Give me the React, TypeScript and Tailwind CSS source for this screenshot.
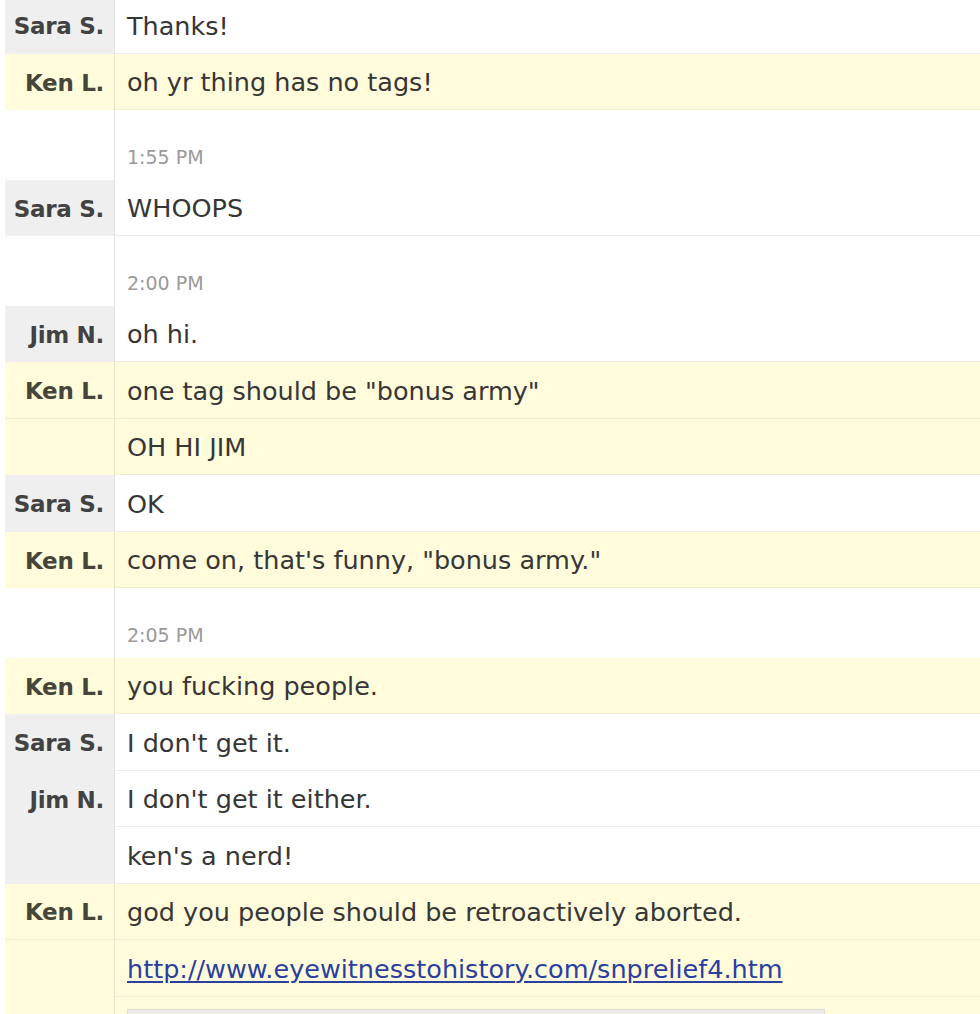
const rows: Array<
  | { kind: 'msg'; name?: string; who: 'sara' | 'ken' | 'jim'; text: string; link?: boolean; cont?: boolean }
  | { kind: 'time'; text: string }
> = [
  { kind: 'msg', name: 'Sara S.', who: 'sara', text: 'Thanks!' },
  { kind: 'msg', name: 'Ken L.', who: 'ken', text: 'oh yr thing has no tags!' },
  { kind: 'time', text: '1:55 PM' },
  { kind: 'msg', name: 'Sara S.', who: 'sara', text: 'WHOOPS' },
  { kind: 'time', text: '2:00 PM' },
  { kind: 'msg', name: 'Jim N.', who: 'jim', text: 'oh hi.' },
  { kind: 'msg', name: 'Ken L.', who: 'ken', text: 'one tag should be "bonus army"' },
  { kind: 'msg', who: 'ken', text: 'OH HI JIM', cont: true },
  { kind: 'msg', name: 'Sara S.', who: 'sara', text: 'OK' },
  { kind: 'msg', name: 'Ken L.', who: 'ken', text: 'come on, that\'s funny, "bonus army."' },
  { kind: 'time', text: '2:05 PM' },
  { kind: 'msg', name: 'Ken L.', who: 'ken', text: 'you fucking people.' },
  { kind: 'msg', name: 'Sara S.', who: 'sara', text: "I don't get it." },
  { kind: 'msg', name: 'Jim N.', who: 'jim', text: "I don't get it either." },
  { kind: 'msg', who: 'jim', text: "ken's a nerd!", cont: true },
  { kind: 'msg', name: 'Ken L.', who: 'ken', text: 'god you people should be retroactively aborted.' },
  { kind: 'msg', who: 'ken', text: 'http://www.eyewitnesstohistory.com/snprelief4.htm', link: true, cont: true },
]

export default function App() {
  return (
    <div
      className="h-[1014px] overflow-hidden bg-white text-[#363636]"
      style={{ fontFamily: '"DejaVu Sans", Verdana, sans-serif' }}
    >
      <div className="-mt-[3px] pl-[5px]">
        {rows.map((r, i) => {
          if (r.kind === 'time') {
            return (
              <div key={i} className="flex h-[69.5px]">
                <div className="w-[110px] shrink-0 border-r border-[#e2e2e2]" />
                <div className="flex flex-1 items-end pb-[8px] pl-[12px] text-[19px] text-[#9a9a9a]">
                  {r.text}
                </div>
              </div>
            )
          }
          const ken = r.who === 'ken'
          const next = rows[i + 1]
          const nextCont = next && next.kind === 'msg' && next.cont
          return (
            <div
              key={i}
              className={`flex h-[56.5px] ${ken ? 'bg-[#fffbdb]' : 'bg-white'}`}
            >
              <div
                className={`flex w-[110px] shrink-0 items-center justify-end whitespace-nowrap border-r pr-[10px] pt-[2px] text-[23px] font-bold tracking-[-0.3px] ${
                  ken ? 'border-[#e8e4c6] text-[#45453a]' : 'border-[#e2e2e2] bg-[#efefef] text-[#424242]'
                } ${ken && nextCont ? 'border-b border-b-[#f1ecce]' : ''}`}
              >
                {r.name}
              </div>
              <div
                className={`flex flex-1 items-center whitespace-nowrap border-b pl-[12px] pt-[2px] text-[25.5px] ${
                  ken ? 'border-b-[#f1ecce]' : 'border-b-[#ececec]'
                }`}
              >
                {r.link ? (
                  <span className="text-[#2a3f9e] underline decoration-[1.5px] underline-offset-[3px]">{r.text}</span>
                ) : (
                  r.text
                )}
              </div>
            </div>
          )
        })}
        <div className="flex h-[40px] bg-[#fffbdb]">
          <div className="w-[110px] shrink-0 border-r border-[#e8e4c6]" />
          <div className="flex-1 pl-[12px] pt-[12px]">
            <div className="h-[40px] w-[698px] border border-[#dcdcd6] bg-[#ebebe7]" />
          </div>
        </div>
      </div>
    </div>
  )
}
